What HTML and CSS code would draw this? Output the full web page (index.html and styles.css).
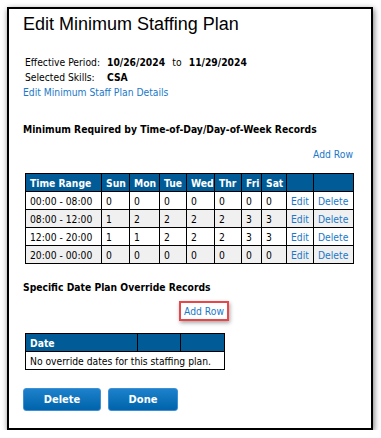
FILE: index.html
```html
<!DOCTYPE html>
<html lang="en">
<head>
  <meta charset="UTF-8" />
  <title>Edit Minimum Staffing Plan</title>
  <link rel="stylesheet" href="styles.css">
</head>
<body>
  <div class="dialog">
    <h1>Edit Minimum Staffing Plan</h1>

    <div class="info">
      <span class="label">Effective Period:</span>
      <span class="value">10/26/2024 <span class="to">to</span> 11/29/2024</span>
      <span class="label">Selected Skills:</span>
      <span class="value skill">CSA</span>
    </div>
    <a class="link" href="#">Edit Minimum Staff Plan Details</a>

    <h2>Minimum Required by Time-of-Day/Day-of-Week Records</h2>
    <div class="section wide">
      <div class="add-row"><a href="#">Add Row</a></div>
      <table class="grid">
        <tr>
          <th class="c-range">Time Range</th>
          <th class="c-day1">Sun</th>
          <th class="c-day2">Mon</th>
          <th class="c-day3">Tue</th>
          <th class="c-day4">Wed</th>
          <th class="c-day5">Thr</th>
          <th class="c-day6">Fri</th>
          <th class="c-day7">Sat</th>
          <th class="c-edit"></th>
          <th class="c-del"></th>
        </tr>
        <tr>
          <td>00:00 - 08:00</td><td>0</td><td>0</td><td>0</td><td>0</td><td>0</td><td>0</td><td>0</td>
          <td><a href="#">Edit</a></td><td><a href="#">Delete</a></td>
        </tr>
        <tr class="alt">
          <td>08:00 - 12:00</td><td>1</td><td>2</td><td>2</td><td>2</td><td>2</td><td>3</td><td>3</td>
          <td><a href="#">Edit</a></td><td><a href="#">Delete</a></td>
        </tr>
        <tr>
          <td>12:00 - 20:00</td><td>1</td><td>1</td><td>2</td><td>2</td><td>2</td><td>3</td><td>3</td>
          <td><a href="#">Edit</a></td><td><a href="#">Delete</a></td>
        </tr>
        <tr class="alt">
          <td>20:00 - 00:00</td><td>0</td><td>0</td><td>0</td><td>0</td><td>0</td><td>0</td><td>0</td>
          <td><a href="#">Edit</a></td><td><a href="#">Delete</a></td>
        </tr>
      </table>
    </div>

    <h2 class="second">Specific Date Plan Override Records</h2>
    <div class="section narrow">
      <div class="add-row-boxed"><a class="highlight" href="#">Add Row</a></div>
      <table class="grid">
        <tr>
          <th class="c-date">Date</th>
          <th class="c-blank"></th>
          <th class="c-last"></th>
        </tr>
        <tr>
          <td colspan="3">No override dates for this staffing plan.</td>
        </tr>
      </table>
    </div>

    <div class="buttons">
      <button class="btn btn-delete">Delete</button>
      <button class="btn btn-done">Done</button>
    </div>
  </div>
</body>
</html>
```

FILE: styles.css
```css
* {
  box-sizing: border-box;
}
body {
  margin: 0;
  background: #fff;
  color: #000;
  font-family: "DejaVu Sans Condensed", "DejaVu Sans", sans-serif;
  font-size: 10.25px;
}
.dialog {
  margin: 7px 0 0 7px;
  width: 366px;
  height: 423px;
  border: 2px solid #000;
  background: #fff;
  padding: 5px 14px 0 14px;
  box-shadow: 1px 2px 6px rgba(0, 0, 0, 0.55);
}
h1 {
  margin: 0;
  font-family: "Liberation Sans", Arial, sans-serif;
  font-size: 18px;
  font-weight: normal;
  line-height: 21px;
}
.info {
  display: grid;
  grid-template-columns: 82px auto;
  margin: 20px 0 0 2px;
  line-height: 15px;
}
.value {
  font-weight: bold;
}
.to {
  font-weight: normal;
  margin: 0 4px;
}
a {
  color: #1b78c8;
  text-decoration: none;
}
.link {
  display: block;
  line-height: 15px;
}
h2 {
  margin: 22px 0 0 0;
  font-size: 10.25px;
  font-weight: bold;
  line-height: 15px;
}
h2.second {
  margin-top: 16px;
}
.section {
  margin-left: 2px;
}
.section.wide {
  width: 328px;
}
.section.narrow {
  width: 199px;
}
.add-row {
  text-align: right;
  line-height: 15px;
  margin: 10px 0 11px 0;
}
.add-row-boxed {
  display: flex;
  justify-content: flex-end;
  margin: 6px 0 12px 0;
}
.highlight {
  display: block;
  line-height: 14px;
  padding: 1px 3px 1px 3px;
  margin-right: -5px;
  border: 2px solid #e8474a;
  box-shadow: 1px 2px 4px rgba(0, 0, 0, 0.35);
}
.grid {
  border-collapse: collapse;
  table-layout: fixed;
  width: 100%;
}
.grid th, .grid td {
  border: 1px solid #000;
  padding: 0 4px;
  height: 18px;
  text-align: left;
  white-space: nowrap;
  overflow: hidden;
}
.grid th {
  background: #005b96;
  color: #fff;
  font-weight: bold;
}
.grid tr.alt td {
  background: #f0f0f0;
}
.c-range { width: 76px; }
.c-day1 { width: 28px; }
.c-day2 { width: 30px; }
.c-day3 { width: 27px; }
.c-day4 { width: 28px; }
.c-day5 { width: 27px; }
.c-day6 { width: 20px; }
.c-day7 { width: 25px; }
.c-edit { width: 27px; }
.c-del { width: 40px; }
.c-date { width: 112px; }
.c-blank { width: 43px; }
.c-last { width: 44px; }
.buttons {
  display: flex;
  gap: 7px;
  margin-top: 18px;
}
.btn {
  height: 23px;
  border: 1px solid #3d8fd6;
  border-radius: 3px;
  background: linear-gradient(#1c82cb, #0063ab);
  color: #fff;
  font-family: "DejaVu Sans Condensed", "DejaVu Sans", sans-serif;
  font-size: 11px;
  font-weight: bold;
  padding: 0;
}
.btn-delete { width: 78px; }
.btn-done { width: 70px; }
```
